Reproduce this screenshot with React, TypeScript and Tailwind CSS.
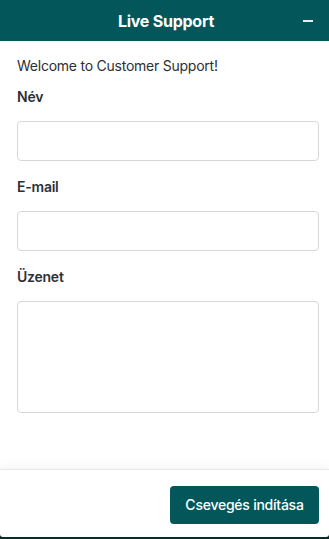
import React, { useState } from 'react';

const Field = ({ label, children }: { label: string; children: React.ReactNode }) => (
  <div className="flex flex-col">
    <label className="text-sm leading-5 font-semibold text-[#2b3036] mb-[14px]">{label}</label>
    {children}
  </div>
);

const App: React.FC = () => {
  const [name, setName] = useState('');
  const [email, setEmail] = useState('');
  const [message, setMessage] = useState('');

  return (
    <div className="w-[329px] h-[539px] bg-[#092b2c] tracking-[-0.015em]" style={{ fontFamily: 'Inter, "Noto Sans", sans-serif' }}>
      <div className="h-[537px] flex flex-col bg-white rounded-b-[3px] overflow-hidden">
        <div className="h-[41px] shrink-0 bg-[#03575b] flex items-center px-4 text-white">
          <span className="w-[10px]" />
          <h2 className="flex-1 text-center pl-[3px] text-base font-bold">Live Support</h2>
          <button className="w-[10px] h-[10px] flex items-center justify-center" aria-label="Minimize">
            <span className="block w-[10px] h-[2px] bg-white/90" />
          </button>
        </div>

        <div className="flex-1 pt-[15px] pl-[17px] pr-[10px] text-[#2b3036]">
          <p className="text-sm leading-5 mb-[11px]">Welcome to Customer Support!</p>
          <div className="flex flex-col gap-4">
            <Field label="Név">
              <input value={name} onChange={e => setName(e.target.value)} className="h-[40px] border border-[#d5d8db] rounded-[4px] px-3 text-sm outline-none" />
            </Field>
            <Field label="E-mail">
              <input value={email} onChange={e => setEmail(e.target.value)} type="email" className="h-[40px] border border-[#d5d8db] rounded-[4px] px-3 text-sm outline-none" />
            </Field>
            <Field label="Üzenet">
              <textarea value={message} onChange={e => setMessage(e.target.value)} className="h-[112px] border border-[#d5d8db] rounded-[4px] px-3 py-2 text-sm outline-none resize-none" />
            </Field>
          </div>
        </div>

        <div className="shrink-0 h-[68px] border-t border-[#e6e7e8] shadow-[0_-4px_10px_rgba(0,0,0,0.04)] flex justify-end items-start pt-[16px] pr-[10px]">
          <button className="h-[38px] w-[149px] bg-[#03575b] text-white text-sm font-medium rounded-[4px]">Csevegés indítása</button>
        </div>
      </div>
    </div>
  );
};

export default App;
